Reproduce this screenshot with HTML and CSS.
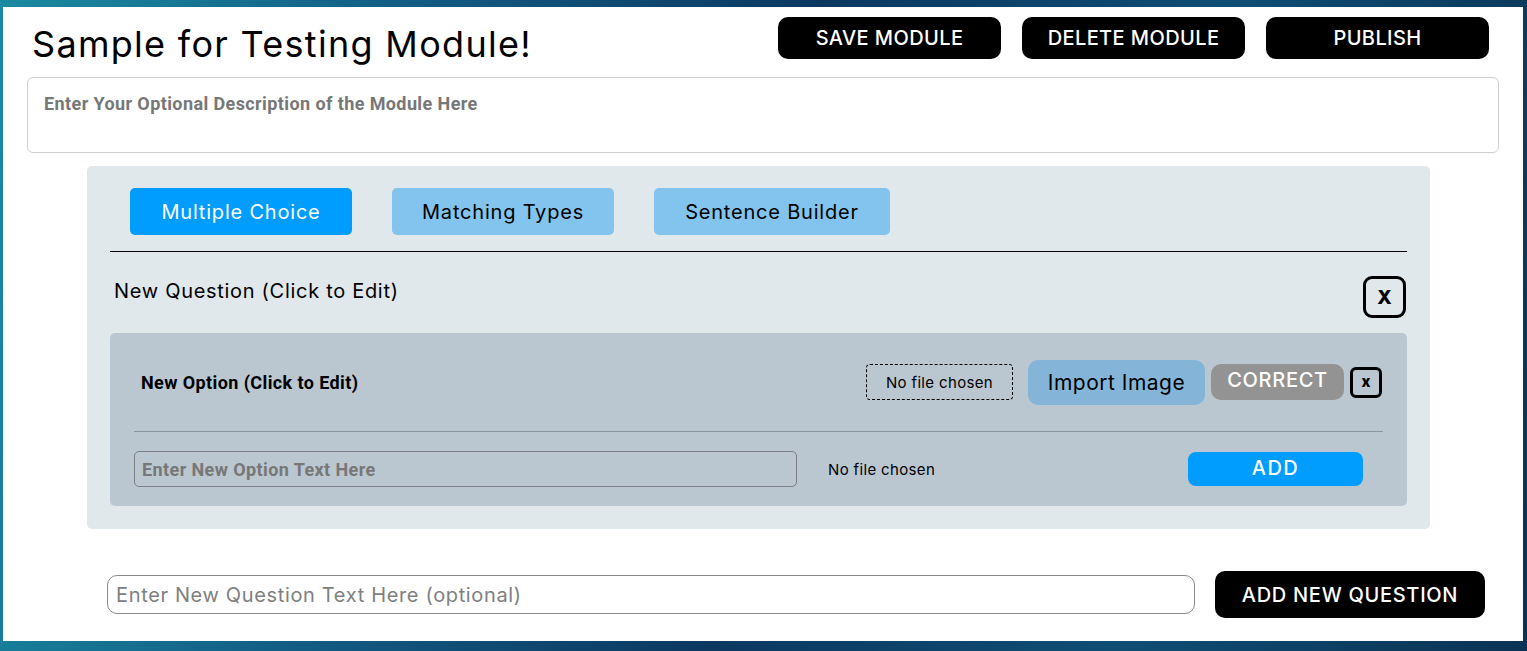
FILE: index.html
```html
<!DOCTYPE html>
<html lang="en">
<head>
<meta charset="utf-8">
<title>Module Editor</title>
<link rel="stylesheet" href="styles.css">
</head>
<body>
<div class="page">
  <header class="top">
    <h1 class="title">Sample for Testing Module!</h1>
    <div class="actions">
      <button class="btn-dark">SAVE MODULE</button>
      <button class="btn-dark">DELETE MODULE</button>
      <button class="btn-dark">PUBLISH</button>
    </div>
  </header>

  <textarea class="desc" placeholder="Enter Your Optional Description of the Module Here"></textarea>

  <section class="editor">
    <nav class="tabs">
      <button class="tab active">Multiple Choice</button>
      <button class="tab">Matching Types</button>
      <button class="tab">Sentence Builder</button>
    </nav>
    <div class="rule"></div>

    <div class="question-head">
      <span class="question-text">New Question (Click to Edit)</span>
      <button class="close-lg">X</button>
    </div>

    <div class="options">
      <div class="option-row">
        <span class="option-text">New Option (Click to Edit)</span>
        <span class="file-box">No file chosen</span>
        <button class="import">Import Image</button>
        <button class="correct">CORRECT</button>
        <button class="close-sm">x</button>
      </div>
      <div class="sep"></div>
      <div class="new-option">
        <input class="option-input" type="text" placeholder="Enter New Option Text Here">
        <span class="file-plain">No file chosen</span>
        <button class="add">ADD</button>
      </div>
    </div>
  </section>

  <div class="new-question">
    <input class="question-input" type="text" placeholder="Enter New Question Text Here (optional)">
    <button class="btn-dark btn-add-q">ADD NEW QUESTION</button>
  </div>
</div>
</body>
</html>
```

FILE: styles.css
```css
* { box-sizing: border-box; }

html, body { height: 100%; }

body {
  margin: 0;
  padding: 7px 4px 10px 3px;
  background: linear-gradient(100deg, #1a8aa0 0%, #125c84 25%, #0c3860 50%, #0f4e74 75%, #0b3254 100%);
  font-family: Inter, "Open Sans", sans-serif;
  color: #000;
}

.page {
  background: #fff;
  height: 634px;
  padding: 10px 34px 0 24px;
}

button {
  font-family: Inter, "Open Sans", sans-serif;
  border: none;
  cursor: pointer;
}

/* header */
.top {
  display: flex;
  justify-content: space-between;
  align-items: flex-start;
  height: 60px;
}

.title {
  margin: 6px 0 0 5px;
  font-size: 36px;
  font-weight: 400;
  line-height: 42px;
  letter-spacing: 1.3px;
}

.actions {
  display: flex;
  gap: 21px;
}

.btn-dark {
  background: #000;
  color: #fff;
  font-size: 20px;
  font-weight: 500;
  letter-spacing: 0.4px;
  border-radius: 10px;
  width: 223px;
  height: 42px;
  padding: 0;
}

/* description */
.desc {
  display: block;
  width: 1472px;
  height: 76px;
  border: 1px solid #cfcfcf;
  border-radius: 6px;
  padding: 15px 16px;
  resize: none;
  font-family: Roboto, "Liberation Sans", sans-serif;
  font-weight: 700;
  font-size: 18px;
  letter-spacing: 0.4px;
  outline: none;
}
.desc::placeholder { color: #777; }

/* editor */
.editor {
  width: 1343px;
  margin: 13px 0 0 60px;
  background: #e0e8eb;
  border-radius: 5px;
  padding: 22px 23px 23px;
}

.tabs {
  display: flex;
  gap: 40px;
  margin-left: 20px;
}

.tab {
  height: 47px;
  padding: 0;
  width: 222px;
  background: #82c4ee;
  color: #000;
  font-size: 20px;
  letter-spacing: 0.8px;
  border-radius: 5px;
}
.tab:nth-child(3) { width: 236px; }
.tab.active { background: #009dff; color: #fff; }

.rule {
  height: 1px;
  background: #000;
  margin-top: 16px;
}

.question-head {
  display: flex;
  justify-content: space-between;
  align-items: flex-start;
  padding: 24px 1px 15px 4px;
}

.question-text {
  font-size: 20px;
  letter-spacing: 0.7px;
  line-height: 30px;
}

.close-lg {
  width: 43px;
  height: 42px;
  border: 3px solid #000;
  border-radius: 9px;
  background: transparent;
  font-size: 19px;
  font-weight: 800;
  padding: 0;
}

/* options */
.options {
  background: #bac7d0;
  border-radius: 5px;
  padding: 0 24px;
}

.option-row {
  display: flex;
  align-items: center;
  height: 98px;
  padding: 0 1px 0 7px;
}

.option-text {
  font-family: Roboto, "Liberation Sans", sans-serif;
  font-weight: 700;
  font-size: 18px;
  letter-spacing: 0.4px;
  margin-right: auto;
}

.file-box {
  width: 147px;
  height: 36px;
  border: 1px dashed #000;
  border-radius: 4px;
  display: flex;
  align-items: center;
  justify-content: center;
  font-size: 15px;
  letter-spacing: 0.35px;
}

.import {
  margin-left: 15px;
  width: 177px;
  height: 45px;
  background: #84b5d8;
  border-radius: 10px;
  font-size: 21px;
  letter-spacing: 0.5px;
  color: #000;
  padding: 0;
}

.correct {
  margin-left: 6px;
  width: 133px;
  height: 36px;
  background: #939393;
  color: #fff;
  border-radius: 10px;
  font-size: 20px;
  font-weight: 500;
  letter-spacing: 0.7px;
  line-height: 32px;
  padding: 0 0 4px;
}

.close-sm {
  margin-left: 6px;
  width: 32px;
  height: 31px;
  border: 3px solid #000;
  border-radius: 6px;
  background: transparent;
  font-size: 15px;
  font-weight: 800;
  padding: 0 0 2px;
}

.sep {
  height: 1px;
  background: #8995a0;
}

.new-option {
  display: flex;
  align-items: center;
  padding: 19px 0;
}

.option-input {
  width: 663px;
  height: 36px;
  border: 1px solid #7a7f85;
  border-radius: 5px;
  background: transparent;
  padding: 0 7px;
  font-family: Roboto, "Liberation Sans", sans-serif;
  font-weight: 700;
  font-size: 18px;
  letter-spacing: 0.4px;
  outline: none;
}
.option-input::placeholder { color: #777; }

.file-plain {
  margin-left: 31px;
  font-size: 15px;
  letter-spacing: 0.35px;
}

.add {
  margin-left: auto;
  margin-right: 20px;
  width: 175px;
  height: 34px;
  background: #009dff;
  color: #fff;
  border-radius: 8px;
  font-size: 20px;
  font-weight: 500;
  letter-spacing: 1.5px;
  padding: 0 0 3px;
}

/* bottom */
.new-question {
  display: flex;
  align-items: center;
  gap: 20px;
  margin: 42px 0 0 80px;
}

.question-input {
  width: 1088px;
  height: 39px;
  border: 1px solid #8a8a8a;
  border-radius: 10px;
  padding: 0 8px;
  font-family: Inter, "Open Sans", sans-serif;
  font-size: 20px;
  letter-spacing: 0.65px;
  outline: none;
}
.question-input::placeholder { color: #808080; }

.btn-add-q {
  width: 270px;
  height: 47px;
  letter-spacing: 0.7px;
}
```
